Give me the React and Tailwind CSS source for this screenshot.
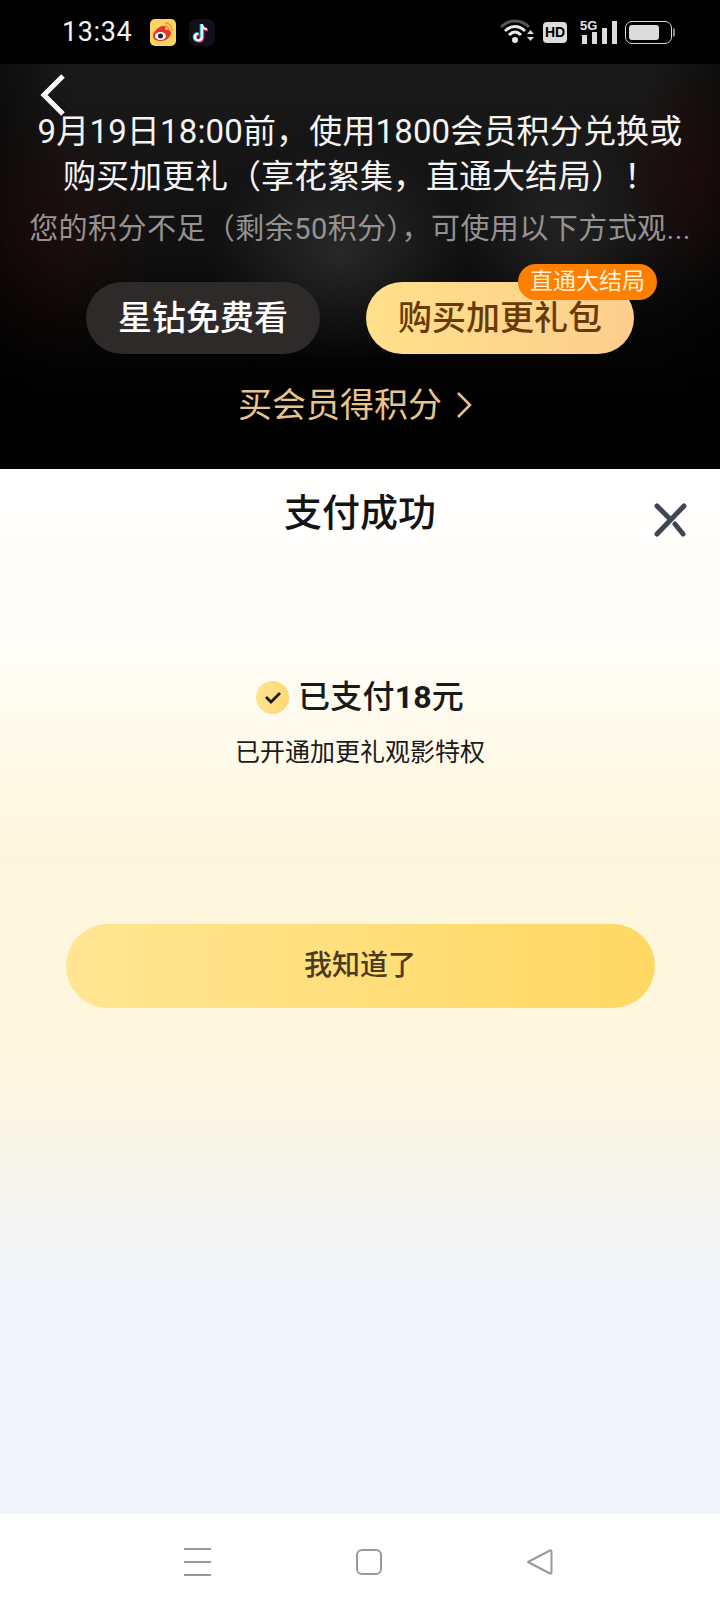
import React from "react";

const cjk = "font-['Roboto','Noto_Sans_CJK_SC',sans-serif]";

const StatusBar = () => {
  return (
    <div className="flex h-16 shrink-0 items-center bg-black pl-[62px] pr-[45px]">
      <span className="w-[72px] text-[27px] leading-none tracking-[0.6px] text-[#f2f2f2]">13:34</span>
      <svg className="ml-[16px]" width="26" height="27" viewBox="0 0 26 27">
        <rect width="26" height="27" rx="5" fill="#fcd263" />
        <path d="M3 17c0-4 6-10 10-10 3 0 3 2 2 4 3-1 6 0 6 3 0 4-5 8-10 8-5 0-8-2-8-5z" fill="#e5362c" />
        <ellipse cx="10.500" cy="17" rx="5.500" ry="4" fill="#fff" />
        <circle cx="10.500" cy="17" r="2.500" fill="#222" />
        <path d="M15 4c4 0 7 3 7 8M15 7c2 0 4 2 4 4" stroke="#ee8f2a" strokeWidth="1.500" fill="none" />
      </svg>
      <svg className="ml-[13px]" width="26" height="27" viewBox="0 0 26 27">
        <rect width="26" height="27" rx="7" fill="#10111c" />
        <path d="M13 5v13a3.500 3.500 0 1 1-3.500-3.500M13 5.500c0 3 2.500 4.500 5 4.500" stroke="#2fd9e0" strokeWidth="2.600" fill="none" transform="translate(-1 0)" />
        <path d="M13 5v13a3.500 3.500 0 1 1-3.500-3.500M13 5.500c0 3 2.500 4.500 5 4.500" stroke="#f2295b" strokeWidth="2.600" fill="none" transform="translate(1 1)" />
        <path d="M13 5v13a3.500 3.500 0 1 1-3.500-3.500M13 5.500c0 3 2.500 4.500 5 4.500" stroke="#fff" strokeWidth="2.200" fill="none" />
      </svg>
      <div className="ml-auto flex items-center">
        <svg width="34" height="26" viewBox="0 0 34 26">
          <path d="M1 8C9 0 21 0 29 8" stroke="#555" strokeWidth="3" fill="none" />
          <path d="M5 12c6-6 14-6 20 0M9 16c4-4 8-4 12 0" stroke="#e8e8e8" strokeWidth="3" fill="none" />
          <circle cx="15" cy="21" r="3" fill="#e8e8e8" />
          <path d="M27 15l3.500-4 3.500 4zM27 18h7l-3.500 4z" fill="#d8d8d8" />
        </svg>
        <div className="ml-[9px] flex h-[21px] w-[24px] items-center justify-center rounded-[4px] bg-[#dcdcdc] text-[14px] font-bold leading-none text-black [font-family:'Liberation_Sans',sans-serif]">
          HD
        </div>
        <div className="relative ml-[13px] h-[24px] w-[34px]">
          <span className="absolute left-0 top-[-1px] text-[13px] font-bold leading-none text-[#e4e4e4] [font-family:'Liberation_Sans',sans-serif]">5G</span>
          <div className="absolute bottom-0 left-[2px] flex items-end gap-[5px]">
            <div className="h-[9px] w-[5px] bg-[#dcdcdc]" />
            <div className="h-[12px] w-[5px] bg-[#dcdcdc]" />
            <div className="h-[16px] w-[5px] bg-[#dcdcdc]" />
            <div className="h-[23px] w-[5px] bg-[#dcdcdc]" />
          </div>
        </div>
        <div className="ml-[11px] flex items-center">
          <div className="h-[23px] w-[47px] rounded-[7px] border border-[#d8d8d8] p-[3px]">
            <div className="h-full w-[30px] rounded-[3px] bg-[#dcdcdc]" />
          </div>
          <div className="ml-[1px] h-[9px] w-[2px] rounded-r bg-[#8a8a8a]" />
        </div>
      </div>
    </div>
  );
};

const Hero = () => {
  return (
    <div className="relative h-[405px] shrink-0 overflow-hidden bg-[linear-gradient(180deg,#1a1a1a_0%,#101010_45%,#070707_62%,#000_85%)]">
      <div className="absolute inset-0 bg-[radial-gradient(ellipse_130px_110px_at_340px_190px,rgba(80,80,80,0.38),transparent),radial-gradient(ellipse_100px_130px_at_560px_170px,rgba(70,70,70,0.32),transparent),radial-gradient(ellipse_80px_120px_at_690px_110px,rgba(50,8,8,0.4),transparent),radial-gradient(ellipse_110px_140px_at_50px_170px,rgba(50,8,8,0.35),transparent),linear-gradient(90deg,rgba(0,0,0,0.5),transparent_10%,transparent_90%,rgba(0,0,0,0.5))]" />
      <svg className="absolute left-[37px] top-[9px]" width="32" height="44" viewBox="0 0 32 44">
        <path d="M26 3L7 22l19 19" stroke="#fff" strokeWidth="5" fill="none" />
      </svg>
      <div className="relative flex flex-col items-center pt-[45px]">
        <p className="whitespace-nowrap text-[33px] leading-[45px] tracking-[0.15px] text-[#f4f4f4]">{"9月19日18:00前\uFF0C使用1800会员积分兑换或"}</p>
        <p className="whitespace-nowrap text-[33px] leading-[45px] text-[#f4f4f4]">{"购买加更礼\uFF08享花絮集\uFF0C直通大结局\uFF09\uFF01"}</p>
        <p className="mt-[7px] whitespace-nowrap text-[29px] leading-[46px] tracking-[0.45px] text-[#969292]">{"您的积分不足\uFF08剩余50积分\uFF09\uFF0C可使用以下方式观..."}</p>
      </div>
      <div className="relative mt-[30px] flex justify-center gap-[46px]">
        <div className="flex h-[72px] w-[234px] items-center justify-center rounded-full bg-[#2e2a2a] text-[34px] font-medium text-white">
          星钻免费看
        </div>
        <div className="relative flex h-[72px] w-[268px] items-center justify-center rounded-full bg-[linear-gradient(90deg,#ffe08a,#fdce8e)] text-[34px] font-medium text-[#6a3a06]">
          购买加更礼包
          <div className="absolute right-[-23px] top-[-18px] flex h-[36px] w-[139px] items-center justify-center rounded-full bg-[#ff8000] text-[23px] font-normal text-[#fff1dc]">
            直通大结局
          </div>
        </div>
      </div>
      <div className="relative mt-[28px] flex items-center justify-center gap-[14px] pr-[10px] text-[34px] leading-[46px] text-[#e8c48c]">
        买会员得积分
        <svg width="16" height="28" viewBox="0 0 16 28">
          <path d="M2 2l12 12L2 26" stroke="#e8c48c" strokeWidth="2.500" fill="none" />
        </svg>
      </div>
    </div>
  );
};

const PaySheet = () => {
  return (
    <div className="relative flex flex-1 flex-col items-center bg-[linear-gradient(180deg,#fff_0%,#fffefa_15%,#fef6dc_37%,#fdf6e0_58%,#f1f4f9_77%,#f1f4f9_100%)]">
      <h2 className="mt-[17px] text-[38px] font-medium leading-[54px] text-[#141414]">支付成功</h2>
      <svg className="absolute right-[33px] top-[34px]" width="34" height="34" viewBox="0 0 34 34">
        <path d="M31 3L4 31M4 3l13 13M22 21l8 10" stroke="#3f4654" strokeWidth="5" strokeLinecap="round" fill="none" />
      </svg>
      <div className="mt-[134px] flex items-center">
        <div className="flex h-[33px] w-[33px] items-center justify-center rounded-full bg-[linear-gradient(90deg,#ffe38f,#fdd974)]">
          <svg width="18" height="14" viewBox="0 0 18 14">
            <path d="M2 7l5 5 9-9" stroke="#1a1a1a" strokeWidth="2.800" fill="none" />
          </svg>
        </div>
        <p className="ml-[9px] text-[32px] font-medium leading-[46px] tracking-[0.2px] text-[#1a1a1a]">
          已支付<span className="font-bold">18</span>元
        </p>
      </div>
      <p className="mt-[15px] text-[25px] leading-[36px] text-[#1a1a1a]">已开通加更礼观影特权</p>
      <button className="mt-[153px] h-[84px] w-[589px] rounded-full bg-[linear-gradient(90deg,#ffe693,#ffd863)] text-[28px] font-medium text-[#4a3a20]">
        我知道了
      </button>
    </div>
  );
};

const NavBar = () => {
  return (
    <div className="flex h-[98px] shrink-0 items-center bg-white pb-[2px] pl-[184px] pr-[166px]">
      <div className="flex h-[28px] w-[27px] flex-col justify-between">
        <div className="h-[2px] bg-[#999]" />
        <div className="h-[2px] bg-[#999]" />
        <div className="h-[2px] bg-[#999]" />
      </div>
      <div className="ml-[145px] h-[26px] w-[26px] rounded-[6px] border-2 border-[#999]" />
      <svg className="ml-auto" width="28" height="28" viewBox="0 0 28 28">
        <path d="M2 14L24 2.500a1 1 0 0 1 1.500 1v21a1 1 0 0 1-1.500 1z" stroke="#999" strokeWidth="2" strokeLinejoin="round" fill="none" />
      </svg>
    </div>
  );
};

export default function App() {
  return (
    <div className={`flex h-[1612px] w-[720px] flex-col overflow-hidden ${cjk}`}>
      <StatusBar />
      <Hero />
      <PaySheet />
      <NavBar />
    </div>
  );
}
